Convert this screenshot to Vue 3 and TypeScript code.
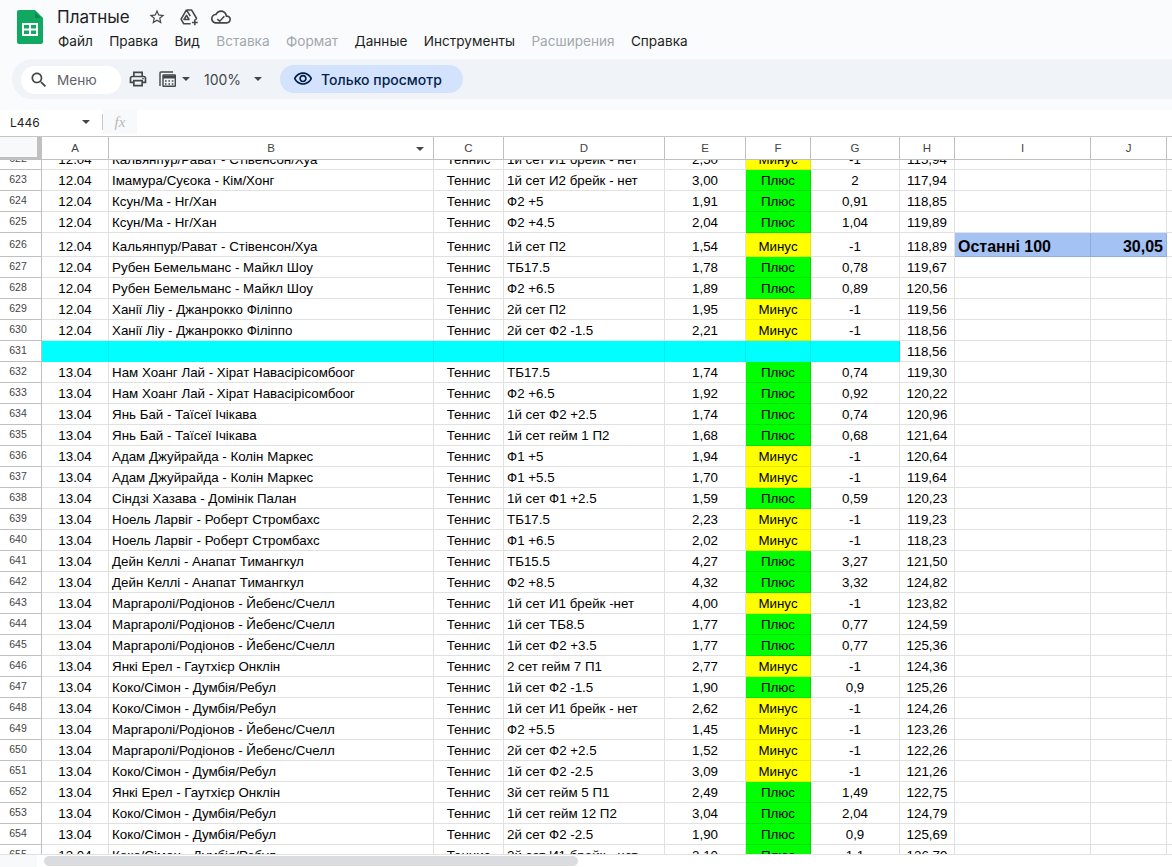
<script setup lang="ts">
// Spreadsheet view: rows are [num, date, match, bet, odds, result, profit, total]
type Row = [number, string, string, string, string, string, string, string];

const KX = "Кальянпур/Рават - Стівенсон/Хуа";
const KS = "Ксун/Ма - Нг/Хан";
const RB = "Рубен Бемельманс - Майкл Шоу";
const HL = "Ханії Ліу - Джанрокко Філіппо";
const NH = "Нам Хоанг Лай - Хірат Навасірісомбоог";
const YB = "Янь Бай - Таїсеї Ічікава";
const AD = "Адам Джуйрайда - Колін Маркес";
const NL = "Ноель Ларвіг - Роберт Стромбахс";
const DK = "Дейн Келлі - Анапат Тимангкул";
const MR = "Маргаролі/Родіонов - Йебенс/Счелл";
const YE = "Янкі Ерел - Гаутхієр Онклін";
const KO = "Коко/Сімон - Думбія/Ребул";
const P = "Плюс";
const M = "Минус";

const rows: Row[] = [
  [622, "12.04", KX, "1й сет И1 брейк - нет", "2,50", M, "-1", "115,94"],
  [623, "12.04", "Імамура/Суєока - Кім/Хонг", "1й сет И2 брейк - нет", "3,00", P, "2", "117,94"],
  [624, "12.04", KS, "Ф2 +5", "1,91", P, "0,91", "118,85"],
  [625, "12.04", KS, "Ф2 +4.5", "2,04", P, "1,04", "119,89"],
  [626, "12.04", KX, "1й сет П2", "1,54", M, "-1", "118,89"],
  [627, "12.04", RB, "ТБ17.5", "1,78", P, "0,78", "119,67"],
  [628, "12.04", RB, "Ф2 +6.5", "1,89", P, "0,89", "120,56"],
  [629, "12.04", HL, "2й сет П2", "1,95", M, "-1", "119,56"],
  [630, "12.04", HL, "2й сет Ф2 -1.5", "2,21", M, "-1", "118,56"],
  [631, "", "", "", "", "", "", "118,56"],
  [632, "13.04", NH, "ТБ17.5", "1,74", P, "0,74", "119,30"],
  [633, "13.04", NH, "Ф2 +6.5", "1,92", P, "0,92", "120,22"],
  [634, "13.04", YB, "1й сет Ф2 +2.5", "1,74", P, "0,74", "120,96"],
  [635, "13.04", YB, "1й сет гейм 1 П2", "1,68", P, "0,68", "121,64"],
  [636, "13.04", AD, "Ф1 +5", "1,94", M, "-1", "120,64"],
  [637, "13.04", AD, "Ф1 +5.5", "1,70", M, "-1", "119,64"],
  [638, "13.04", "Сіндзі Хазава - Домінік Палан", "1й сет Ф1 +2.5", "1,59", P, "0,59", "120,23"],
  [639, "13.04", NL, "ТБ17.5", "2,23", M, "-1", "119,23"],
  [640, "13.04", NL, "Ф1 +6.5", "2,02", M, "-1", "118,23"],
  [641, "13.04", DK, "ТБ15.5", "4,27", P, "3,27", "121,50"],
  [642, "13.04", DK, "Ф2 +8.5", "4,32", P, "3,32", "124,82"],
  [643, "13.04", MR, "1й сет И1 брейк -нет", "4,00", M, "-1", "123,82"],
  [644, "13.04", MR, "1й сет ТБ8.5", "1,77", P, "0,77", "124,59"],
  [645, "13.04", MR, "1й сет Ф2 +3.5", "1,77", P, "0,77", "125,36"],
  [646, "13.04", YE, "2 сет гейм 7 П1", "2,77", M, "-1", "124,36"],
  [647, "13.04", KO, "1й сет Ф2 -1.5", "1,90", P, "0,9", "125,26"],
  [648, "13.04", KO, "1й сет И1 брейк - нет", "2,62", M, "-1", "124,26"],
  [649, "13.04", MR, "Ф2 +5.5", "1,45", M, "-1", "123,26"],
  [650, "13.04", MR, "2й сет Ф2 +2.5", "1,52", M, "-1", "122,26"],
  [651, "13.04", KO, "1й сет Ф2 -2.5", "3,09", M, "-1", "121,26"],
  [652, "13.04", YE, "3й сет гейм 5 П1", "2,49", P, "1,49", "122,75"],
  [653, "13.04", KO, "1й сет гейм 12 П2", "3,04", P, "2,04", "124,79"],
  [654, "13.04", KO, "2й сет Ф2 -2.5", "1,90", P, "0,9", "125,69"],
  [655, "13.04", KO, "2й сет И1 брейк - нет", "2,10", P, "1,1", "126,79"],
];

const columns = ["A", "B", "C", "D", "E", "F", "G", "H", "I", "J"];
const menus = [
  { label: "Файл" },
  { label: "Правка" },
  { label: "Вид" },
  { label: "Вставка", off: true },
  { label: "Формат", off: true },
  { label: "Данные" },
  { label: "Инструменты" },
  { label: "Расширения", off: true },
  { label: "Справка" },
];

function resultClass(r: string) {
  if (r === P) return "plus";
  if (r === M) return "minus";
  return "";
}
</script>

<template>
  <div class="page">
    <header class="head">
      <svg class="logo" width="26" height="34" viewBox="0 0 26 34">
        <path d="M2 0h16l8 8v24a2 2 0 0 1-2 2H2a2 2 0 0 1-2-2V2a2 2 0 0 1 2-2z" fill="#11a861" />
        <path d="M18 2l6 6h-6z" fill="#0c8a4e" />
        <path d="M5 13h16v13H5z M7 15v3.5h5V15z M14 15v3.5h5V15z M7 20.5V24h5v-3.5z M14 20.5V24h5v-3.5z" fill="#fff" fill-rule="evenodd" />
      </svg>
      <div class="head-text">
        <div class="title-row">
          <span class="doc-title">Платные</span>
          <svg class="t-icon" width="18" height="18" viewBox="0 0 24 24" fill="#444746">
            <path d="M22 9.24l-7.19-.62L12 2 9.19 8.63 2 9.24l5.46 4.73L5.82 21 12 17.27 18.18 21l-1.63-7.03L22 9.24zM12 15.4l-3.76 2.27 1-4.28-3.32-2.88 4.38-.38L12 6.1l1.71 4.04 4.38.38-3.32 2.88 1 4.28L12 15.4z" />
          </svg>
          <svg class="t-icon drive" width="20" height="20" viewBox="0 0 24 24" fill="none" stroke="#444746" stroke-width="1.9" stroke-linejoin="round">
            <path d="M9 3.5h6l6 10-1.2 2M9 3.5L2.5 14.5 5.5 20H14M9 3.5l4.5 7.5" />
            <path d="M6 15l3-5 3 5z" />
            <path d="M19 15v7M15.5 18.5h7" />
          </svg>
          <svg class="t-icon" width="20" height="20" viewBox="0 0 24 24" fill="#444746">
            <path d="M19.35 10.04C18.67 6.59 15.64 4 12 4 9.11 4 6.6 5.64 5.35 8.04 2.34 8.36 0 10.91 0 14c0 3.31 2.69 6 6 6h13c2.76 0 5-2.24 5-5 0-2.64-2.05-4.78-4.65-4.96zM19 18H6c-2.21 0-4-1.79-4-4 0-2.05 1.53-3.76 3.56-3.97l1.07-.11.5-.95C8.08 7.14 9.94 6 12 6c2.62 0 4.88 1.86 5.39 4.43l.3 1.5 1.53.11c1.56.1 2.78 1.41 2.78 2.96 0 1.65-1.35 3-3 3z" />
            <path d="M7.5 14.5l3 2.5 5.5-6" fill="none" stroke="#444746" stroke-width="1.8" />
          </svg>
        </div>
        <nav class="menus">
          <span v-for="m in menus" :key="m.label" :class="{ off: m.off }">{{ m.label }}</span>
        </nav>
      </div>
    </header>

    <div class="toolbar-wrap">
      <div class="toolbar">
        <div class="search">
          <svg width="20" height="20" viewBox="0 0 24 24" fill="#444746">
            <path d="M15.5 14h-.79l-.28-.27C15.41 12.59 16 11.11 16 9.5 16 5.91 13.09 3 9.5 3S3 5.91 3 9.5 5.91 16 9.5 16c1.61 0 3.09-.59 4.23-1.57l.27.28v.79l5 4.99L20.49 19l-4.99-5zm-6 0C7.01 14 5 11.99 5 9.5S7.01 5 9.5 5 14 7.01 14 9.5 11.99 14 9.5 14z" />
          </svg>
          <span>Меню</span>
        </div>
        <svg class="print" width="20" height="20" viewBox="0 0 24 24" fill="#444746">
          <path d="M19 8h-1V3H6v5H5c-1.66 0-3 1.34-3 3v6h4v4h12v-4h4v-6c0-1.66-1.34-3-3-3zM8 5h8v3H8V5zm8 12v2H8v-4h8v2zm2-2v-2H6v2H4v-4c0-.55.45-1 1-1h14c.55 0 1 .45 1 1v4h-2z" />
          <circle cx="18" cy="11.5" r="1" />
        </svg>
        <svg class="calc" width="17" height="16" viewBox="0 0 17 16" fill="none" stroke="#444746" stroke-width="1.4">
          <path d="M1 15V2a1 1 0 0 1 1-1h12" />
          <rect x="4" y="4" width="12.3" height="11.3" rx=".5" />
          <path d="M4 6h12.3" stroke-width="3" />
          <path d="M6 10h1.6M9.4 10H11M12.8 10h1.6M6 13h1.6M9.4 13H11M12.8 13h1.6" stroke-width="1.7" />
        </svg>
        <i class="caret small-gap" />
        <span class="zoom-val">100%</span>
        <i class="caret zoom-gap" />
        <div class="view-pill">
          <svg width="20" height="20" viewBox="0 0 24 24" fill="#041e49">
            <path d="M12 6c3.79 0 7.17 2.13 8.82 5.5C19.17 14.87 15.79 17 12 17s-7.17-2.13-8.82-5.5C4.83 8.13 8.21 6 12 6m0-2C7 4 2.73 7.11 1 11.5 2.73 15.89 7 19 12 19s9.27-3.11 11-7.5C21.27 7.11 17 4 12 4zm0 5c1.38 0 2.5 1.12 2.5 2.5S13.38 14 12 14s-2.5-1.12-2.5-2.5S10.62 9 12 9m0-2c-2.48 0-4.5 2.02-4.5 4.5S9.52 16 12 16s4.5-2.02 4.5-4.5S14.48 7 12 7z" />
          </svg>
          <span>Только просмотр</span>
        </div>
      </div>
    </div>

    <div class="formula">
      <span class="cell-name">L446</span>
      <i class="caret" />
      <span class="sep" />
      <span class="fx">fx</span>
    </div>

    <div class="sheet-head grid-cols">
      <div class="corner" />
      <div v-for="c in columns" :key="c" class="col-head">
        {{ c }}
        <i v-if="c === 'B'" class="caret filter" />
      </div>
      <div class="col-head last" />
    </div>

    <div class="sheet-body">
      <div class="sheet-scroll">
        <div
          v-for="r in rows"
          :key="r[0]"
          class="row grid-cols"
          :class="{ tall: r[0] === 626, cyan: r[0] === 631 }"
        >
          <div class="num">{{ r[0] }}</div>
          <div class="cell mid fill">{{ r[1] }}</div>
          <div class="cell fill">{{ r[2] }}</div>
          <div class="cell mid fill">{{ r[2] ? "Теннис" : "" }}</div>
          <div class="cell fill">{{ r[3] }}</div>
          <div class="cell mid fill">{{ r[4] }}</div>
          <div class="cell mid fill" :class="resultClass(r[5])">{{ r[5] }}</div>
          <div class="cell mid fill">{{ r[6] }}</div>
          <div class="cell mid">{{ r[7] }}</div>
          <template v-if="r[0] === 626">
            <div class="cell summary">Останні 100</div>
            <div class="cell summary end">30,05</div>
          </template>
          <template v-else>
            <div class="cell" />
            <div class="cell" />
          </template>
          <div class="cell last" />
        </div>
      </div>
    </div>

    <div class="scrollbar">
      <div class="scroll-corner" />
      <div class="thumb" />
    </div>
  </div>
</template>

<style>
html,
body {
  margin: 0;
  background: #fff;
}
</style>

<style scoped>
.page {
  width: 1172px;
  height: 867px;
  overflow: hidden;
  display: flex;
  flex-direction: column;
  background: #fff;
  color: #000;
  font-family: "Liberation Sans", Arial, sans-serif;
}

.head {
  height: 59px;
  flex: none;
  display: flex;
  background: #f9fbfd;
  box-sizing: border-box;
  padding: 10px 0 0 17px;
}
.logo {
  flex: none;
}
.head-text {
  margin-left: 14px;
  margin-top: -5px;
  font-family: Inter, "Noto Sans", sans-serif;
}
.title-row {
  display: flex;
  align-items: center;
  height: 24px;
}
.doc-title {
  font-size: 17px;
  color: #1f1f1f;
  width: 91px;
}
.t-icon {
  margin-right: 12px;
}
.t-icon.drive {
  margin-left: 1px;
}
.menus {
  display: flex;
  gap: 16.4px;
  margin-top: 2px;
  padding-left: 1px;
  font-size: 13.6px;
  line-height: 20px;
  color: #1f1f1f;
}
.menus .off {
  color: #a3a8ad;
}

.toolbar-wrap {
  height: 51px;
  flex: none;
  background: #f9fbfd;
  padding-left: 12px;
}
.toolbar {
  height: 40px;
  display: flex;
  align-items: center;
  background: #f0f4f9;
  border-radius: 20px 0 0 20px;
  font-family: Inter, "Noto Sans", sans-serif;
}
.search {
  width: 100px;
  height: 28px;
  margin: 1px 0 0 9px;
  box-sizing: border-box;
  padding-left: 8px;
  display: flex;
  align-items: center;
  gap: 8px;
  background: #fff;
  border-radius: 14px;
  font-size: 13.6px;
  color: #5f6368;
}
.print {
  margin-left: 7px;
}
.calc {
  margin-left: 11px;
}
.caret {
  display: inline-block;
  flex: none;
  width: 0;
  height: 0;
  border-left: 4px solid transparent;
  border-right: 4px solid transparent;
  border-top: 4px solid #444746;
}
.small-gap {
  margin-left: 6px;
}
.zoom-val {
  margin-left: 14px;
  width: 40px;
  font-size: 14px;
  color: #444746;
}
.zoom-gap {
  margin-left: 10px;
}
.view-pill {
  margin-left: 18px;
  width: 183px;
  height: 28px;
  box-sizing: border-box;
  padding-left: 13px;
  display: flex;
  align-items: center;
  gap: 8px;
  background: #d3e3fd;
  border-radius: 14px;
  font-size: 14px;
  font-weight: 500;
  color: #041e49;
}

.formula {
  height: 27px;
  flex: none;
  display: flex;
  align-items: center;
  box-sizing: border-box;
  padding-bottom: 2px;
  border-bottom: 1px solid #c4c7c5;
  background: #fff;
}
.cell-name {
  margin-left: 10px;
  width: 72px;
  font-family: Inter, "Noto Sans", sans-serif;
  font-size: 12px;
  color: #1f1f1f;
}
.sep {
  width: 1px;
  height: 16px;
  margin-left: 12px;
  background: #c7c7c7;
}
.fx {
  width: 34px;
  height: 24px;
  line-height: 24px;
  text-align: center;
  background: #f8f9fa;
  font-family: "Liberation Serif", serif;
  font-style: italic;
  font-size: 15px;
  color: #b8b8b8;
}

.grid-cols {
  display: grid;
  grid-template-columns: 42px 67px 325px 70px 161px 81px 65px 89px 55px 136px 76px 5px;
}
.sheet-head {
  height: 23px;
  flex: none;
  box-sizing: border-box;
  border-bottom: 1px solid #c0c0c0;
  font-size: 11.5px;
  color: #444;
}
.corner {
  background: #f8f9fa;
  border-right: 5px solid #c0c0c0;
  border-bottom: 3px solid #c0c0c0;
  margin-bottom: -1px;
  box-sizing: border-box;
}
.col-head {
  position: relative;
  display: flex;
  align-items: center;
  justify-content: center;
  box-sizing: border-box;
  border-right: 1px solid #c0c0c0;
}
.col-head.last {
  border-right: 0;
}
.filter {
  position: absolute;
  right: 9px;
  top: 10px;
}

.sheet-body {
  height: 695px;
  flex: none;
  overflow: hidden;
  border-bottom: 1px solid #e1e1e1;
  box-sizing: border-box;
}
.sheet-scroll {
  margin-top: -11px;
}
.row {
  height: 21px;
  font-size: 13.33px;
}
.row.tall {
  height: 24px;
}
.num {
  box-sizing: border-box;
  padding: 0 5px 2px 0;
  text-align: center;
  font-size: 10.5px;
  line-height: 18px;
  color: #444;
  background: #fff;
  border-right: 1px solid #c0c0c0;
  border-bottom: 1px solid #c0c0c0;
  display: flex;
  align-items: center;
  justify-content: center;
}
.cell {
  box-sizing: border-box;
  display: flex;
  align-items: flex-end;
  padding: 0 3px;
  line-height: 18px;
  white-space: nowrap;
  overflow: hidden;
  border-right: 1px solid #e1e1e1;
  border-bottom: 1px solid #e1e1e1;
}
.cell.last {
  border-right: 0;
}
.mid {
  justify-content: center;
}
.plus {
  background: #00ff00;
  border-color: #00e000;
}
.minus {
  background: #ffff00;
  border-color: #e6e600;
}
.cyan .fill {
  background: #00ffff;
  border-right-color: #00ecec;
  border-bottom-color: #00ffff;
}
.summary {
  background: #a4c2f4;
  font-size: 16px;
  font-weight: 700;
  border-color: #8fadd8;
}
.end {
  justify-content: flex-end;
}

.scrollbar {
  flex: 1;
  display: flex;
  background: #fff;
}
.scroll-corner {
  width: 37px;
  background: #f8f9fa;
}
.thumb {
  width: 534px;
  height: 10px;
  margin: 1px 0 0 7px;
  border-radius: 5px;
  background: #dadce0;
}
</style>
